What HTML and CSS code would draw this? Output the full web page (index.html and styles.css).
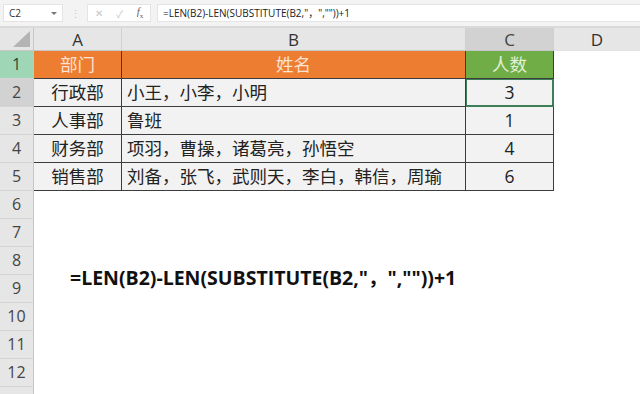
FILE: index.html
```html
<!DOCTYPE html>
<html lang="zh-CN">
<head>
    <meta charset="UTF-8">
    <title>人数统计</title>
    <link rel="stylesheet" href="styles.css">
</head>
<body>
    <div class="toolbar">
        <div class="namebox">C2<span class="caret"></span></div>
        <div class="grip">⋮</div>
        <div class="fnbtns">
            <span class="btn">✕</span>
            <span class="btn">✓</span>
            <span class="btn fx"><i>f</i><sub>x</sub></span>
        </div>
        <div class="formula">=LEN(B2)-LEN(SUBSTITUTE(B2,"，",""))+1</div>
    </div>

    <div class="sheet">
        <!-- column headers -->
        <div class="corner"><span class="tri"></span></div>
        <div class="colhead">A</div>
        <div class="colhead">B</div>
        <div class="colhead active">C</div>
        <div class="colhead last">D</div>

        <!-- row 1 -->
        <div class="rowhead green">1</div>
        <div class="cell head orange center">部门</div>
        <div class="cell head orange center">姓名</div>
        <div class="cell head lime center">人数</div>
        <div class="blank"></div>

        <div class="rowhead active">2</div>
        <div class="cell center">行政部</div>
        <div class="cell">小王，小李，小明</div>
        <div class="cell center selected">3</div>
        <div class="blank"></div>

        <div class="rowhead">3</div>
        <div class="cell center">人事部</div>
        <div class="cell">鲁班</div>
        <div class="cell center">1</div>
        <div class="blank"></div>

        <div class="rowhead">4</div>
        <div class="cell center">财务部</div>
        <div class="cell">项羽，曹操，诸葛亮，孙悟空</div>
        <div class="cell center">4</div>
        <div class="blank"></div>

        <div class="rowhead">5</div>
        <div class="cell center">销售部</div>
        <div class="cell">刘备，张飞，武则天，李白，韩信，周瑜</div>
        <div class="cell center">6</div>
        <div class="blank"></div>

        <div class="rowhead">6</div><div class="empty"></div>
        <div class="rowhead">7</div><div class="empty"></div>
        <div class="rowhead">8</div><div class="empty"></div>
        <div class="rowhead">9</div><div class="empty"></div>
        <div class="rowhead">10</div><div class="empty"></div>
        <div class="rowhead">11</div><div class="empty"></div>
        <div class="rowhead">12</div><div class="empty"></div>
        <div class="rowhead">13</div><div class="empty"></div>

        <!-- floating text box -->
        <div class="textbox">=LEN(B2)-LEN(SUBSTITUTE(B2,"，",""))+1</div>
    </div>
</body>
</html>
```

FILE: styles.css
```css
body {
    margin: 0;
    width: 640px;
    height: 394px;
    overflow: hidden;
    background: #ffffff;
    font-family: "Open Sans", "Noto Sans CJK SC", sans-serif;
    color: #222;
}
.toolbar {
    display: flex;
    align-items: center;
    gap: 6px;
    height: 28px;
    padding: 0 0 0 3px;
    background: #f3f3f3;
    border-bottom: 2px solid #dadada;
    box-sizing: border-box;
}
.namebox {
    position: relative;
    width: 60px;
    height: 18px;
    background: #fff;
    border: 1px solid #e4e4e4;
    box-sizing: border-box;
    font-size: 10px;
    line-height: 16px;
    padding-left: 5px;
    color: #333;
}
.caret {
    position: absolute;
    right: 5px;
    top: 7px;
    border-left: 3px solid transparent;
    border-right: 3px solid transparent;
    border-top: 3px solid #777;
}
.grip {
    width: 12px;
    color: #c6c6c6;
    font-size: 11px;
    text-align: center;
}
.fnbtns {
    display: flex;
    align-items: center;
    justify-content: space-around;
    width: 64px;
    height: 18px;
    background: #fff;
    border: 1px solid #e4e4e4;
    box-sizing: border-box;
}
.btn {
    color: #c4c4c4;
    font-size: 10px;
}
.fx {
    color: #666;
    font-family: "Liberation Serif", serif;
    font-size: 11px;
}
.fx sub {
    font-size: 7px;
}
.formula {
    flex: 1;
    height: 18px;
    background: #fff;
    border: 1px solid #e4e4e4;
    border-right: none;
    box-sizing: border-box;
    font-size: 10px;
    line-height: 16px;
    padding-left: 5px;
    color: #222;
}
.sheet {
    position: relative;
    display: grid;
    grid-template-columns: 34px 88px 344px 88px 86px;
    grid-template-rows: 23px repeat(13, 28px);
}
.corner {
    position: relative;
    background: #e6e6e6;
    border-right: 1px solid #c6c6c6;
    border-bottom: 1px solid #c6c6c6;
}
.tri {
    position: absolute;
    right: 3px;
    bottom: 3px;
    border-left: 17px solid transparent;
    border-bottom: 16px solid #b4b4b4;
}
.colhead {
    background: #e6e6e6;
    border-right: 1px solid #d0d0d0;
    border-bottom: 1px solid #c6c6c6;
    text-align: center;
    font-size: 17px;
    line-height: 23px;
    color: #333;
}
.colhead.active {
    background: #d2d2d2;
    color: #444;
}
.colhead.last {
    border-right: none;
}
.rowhead {
    background: #e6e6e6;
    border-right: 1px solid #c6c6c6;
    border-bottom: 1px solid #d4d4d4;
    text-align: center;
    font-size: 16px;
    line-height: 27px;
    color: #444;
}
.rowhead.green {
    background: #9fd6b5;
    color: #2b4a35;
}
.rowhead.active {
    background: #d2d2d2;
}
.cell {
    background: #f2f2f2;
    border-right: 1px solid #3c3c3c;
    border-bottom: 1px solid #3c3c3c;
    font-size: 17.5px;
    line-height: 27px;
    padding-left: 5px;
    white-space: nowrap;
    overflow: hidden;
}
.cell.center {
    text-align: center;
    padding-left: 0;
}
.cell.head {
    color: #fbe2d2;
}
.orange {
    background: #ed7d31;
}
.lime {
    background: #70ad47;
}
.cell.lime {
    color: #e3f1d8;
}
.selected {
    position: relative;
    box-shadow: inset 0 0 0 1px #3f7f57;
    border-right-color: #3f7f57;
    border-bottom-color: #3f7f57;
}
.selected::after {
    content: "";
    position: absolute;
    right: -3px;
    bottom: -3px;
    width: 4px;
    height: 4px;
    background: #2f6f47;
}
.blank {
    border-top: 1px solid #e2e2e2;
    margin-top: -1px;
}
.blank ~ .blank {
    border-top: none;
    margin-top: 0;
}
.empty {
    grid-column: 2 / 6;
}
.textbox {
    position: absolute;
    left: 70px;
    top: 234px;
    font-size: 19.5px;
    font-weight: 700;
    color: #111;
    white-space: nowrap;
}
```
